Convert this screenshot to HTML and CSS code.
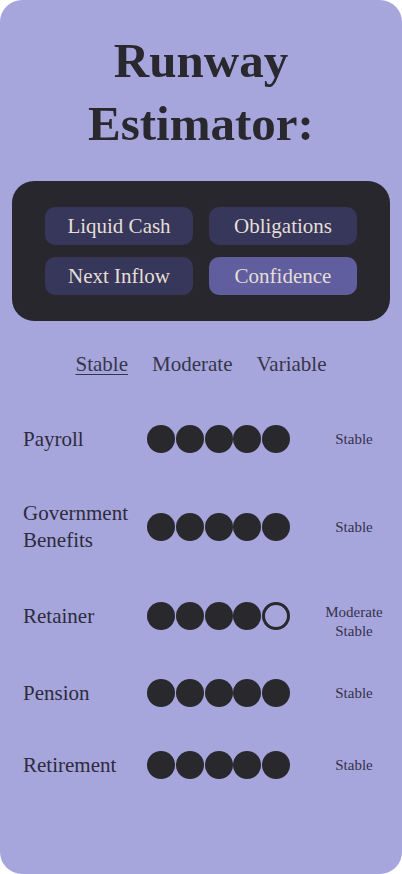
FILE: index.html
```html
<!DOCTYPE html>
<html lang="en">
<head>
<meta charset="utf-8">
<title>Runway Estimator</title>
<link rel="stylesheet" href="styles.css">
</head>
<body>
<main class="card">
  <h1 class="title">Runway<br>Estimator:</h1>
  <section class="panel">
    <button class="chip">Liquid Cash</button>
    <button class="chip">Obligations</button>
    <button class="chip">Next Inflow</button>
    <button class="chip chip-active">Confidence</button>
  </section>
  <nav class="filters">
    <span class="filter filter-active">Stable</span>
    <span class="filter">Moderate</span>
    <span class="filter">Variable</span>
  </nav>
  <ul class="rows">
    <li class="row">
      <span class="label">Payroll</span>
      <span class="dots"><i class="dot"></i><i class="dot"></i><i class="dot"></i><i class="dot"></i><i class="dot"></i></span>
      <span class="status">Stable</span>
    </li>
    <li class="row row-tall">
      <span class="label">Government Benefits</span>
      <span class="dots"><i class="dot"></i><i class="dot"></i><i class="dot"></i><i class="dot"></i><i class="dot"></i></span>
      <span class="status">Stable</span>
    </li>
    <li class="row">
      <span class="label">Retainer</span>
      <span class="dots"><i class="dot"></i><i class="dot"></i><i class="dot"></i><i class="dot"></i><i class="dot dot-empty"></i></span>
      <span class="status status-two">Moderate<br>Stable</span>
    </li>
    <li class="row">
      <span class="label">Pension</span>
      <span class="dots"><i class="dot"></i><i class="dot"></i><i class="dot"></i><i class="dot"></i><i class="dot"></i></span>
      <span class="status">Stable</span>
    </li>
    <li class="row">
      <span class="label">Retirement</span>
      <span class="dots"><i class="dot"></i><i class="dot"></i><i class="dot"></i><i class="dot"></i><i class="dot"></i></span>
      <span class="status">Stable</span>
    </li>
  </ul>
</main>
</body>
</html>
```

FILE: styles.css
```css
* { box-sizing: border-box; }

html, body {
  margin: 0;
  padding: 0;
  background: #ffffff;
}

body {
  font-family: "Liberation Serif", "DejaVu Serif", serif;
  color: #2a2930;
}

.card {
  width: 402px;
  height: 874px;
  background: #a7a6dc;
  border-radius: 22px;
  padding-top: 29px;
  overflow: hidden;
}

.title {
  margin: 0;
  font-size: 49px;
  line-height: 63px;
  font-weight: 700;
  text-align: center;
  color: #29282e;
}

.panel {
  margin: 26px 12px 0;
  height: 140px;
  background: #28272d;
  border-radius: 22px;
  display: grid;
  grid-template-columns: 148px 148px;
  grid-auto-rows: 38px;
  column-gap: 16px;
  row-gap: 12px;
  justify-content: center;
  align-content: center;
}

.chip {
  border: 0;
  border-radius: 10px;
  background: #37365b;
  color: #e4dfd3;
  font-family: "Liberation Serif", "DejaVu Serif", serif;
  font-size: 21px;
  padding: 0;
}

.chip-active {
  background: #605e9e;
}

.filters {
  margin-top: 31px;
  display: flex;
  justify-content: center;
  gap: 24px;
  font-size: 21px;
  line-height: 24px;
  color: #37354a;
}

.filter-active {
  text-decoration: underline;
  text-decoration-thickness: 1px;
  text-underline-offset: 3px;
}

.rows {
  list-style: none;
  margin: 27px 0 0;
  padding: 0;
}

.row {
  display: grid;
  grid-template-columns: 124px 143px 1fr;
  align-items: center;
  padding: 22px 0 22px 23px;
}

.row-tall {
  padding-top: 25px;
  padding-bottom: 21px;
}

.label {
  font-size: 21px;
  line-height: 27px;
  color: #2d2b3c;
}

.dots {
  display: flex;
  gap: 0.75px;
}

.dot {
  width: 28px;
  height: 28px;
  border-radius: 50%;
  background: #29282d;
}

.dot-empty {
  background: transparent;
  border: 3px solid #29282d;
}

.status {
  padding-left: 16px;
  text-align: center;
  font-size: 15px;
  line-height: 19px;
  color: #34324a;
}

.status-two {
  margin-top: 6px;
  margin-bottom: -6px;
}
```
